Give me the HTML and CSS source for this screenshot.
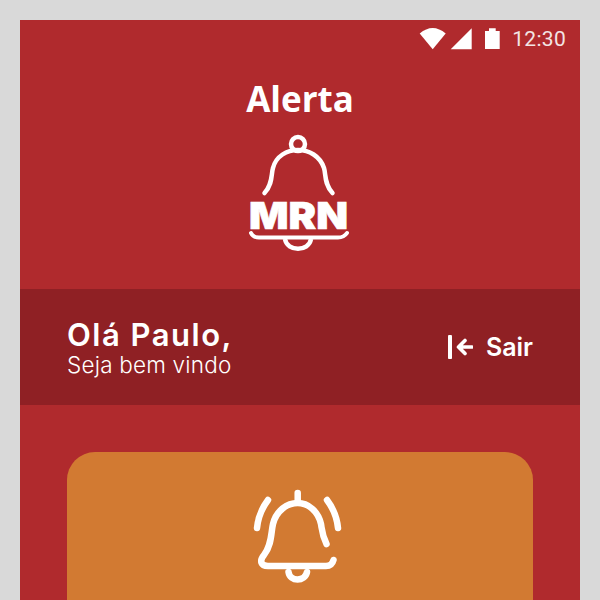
FILE: index.html
```html
<!DOCTYPE html>
<html lang="pt">
<head>
<meta charset="utf-8">
<title>Alerta MRN</title>
<link rel="stylesheet" href="styles.css">
</head>
<body>
<main class="screen">
  <div class="status">
    <svg class="status-icons" width="82" height="22" viewBox="420 28 82 22">
      <path d="M420.7 33.5 Q433.7 22.5 446.7 33.5 L433.7 49.3 Z" fill="#fff"/>
      <path d="M472.7 28.3 V49.3 H451.7 Z" fill="#fff"/>
      <path d="M486 31 H490 V28.3 H496.7 V31 H500.7 V49 H486 Z" fill="#fff"/>
    </svg>
    <span class="clock">12:30</span>
  </div>
  <header class="brand">
    <h1 class="title">Alerta</h1>
    <svg class="logo" width="104" height="120" viewBox="248 132 104 120">
      <circle cx="299" cy="143" r="7" fill="none" stroke="#fff" stroke-width="4.500"/>
      <path d="M265.5 192 C274 183 272 173 274 167 C277 155 288 149 299 149 C310 149 321 155 325 167 C327 173 325 183 333.500 192" fill="none" stroke="#fff" stroke-width="4.500" stroke-linecap="round"/>
      <text class="logo-text" x="250" y="228" textLength="99" lengthAdjust="spacingAndGlyphs">MRN</text>
      <path d="M252 232 Q254 236.500 260 236.500 H339 Q345 236.500 348 232" fill="none" stroke="#fff" stroke-width="4" stroke-linecap="round"/>
      <path d="M286 238 C288 251 310 251 312 238" fill="none" stroke="#fff" stroke-width="4.500"/>
    </svg>
  </header>
  <section class="band">
    <div class="greeting">
      <div class="hello">Olá Paulo,</div>
      <div class="welcome">Seja bem vindo</div>
    </div>
    <div class="logout">
      <svg width="26" height="24" viewBox="447 336 26 24">
        <path d="M450 337.500 V358.500" stroke="#fff" stroke-width="4" stroke-linecap="round" fill="none"/>
        <path d="M472 348 H459 M465 341.500 L458.500 348 L465 354.500" stroke="#fff" stroke-width="3.600" stroke-linecap="round" stroke-linejoin="round" fill="none"/>
      </svg>
      <span class="logout-label">Sair</span>
    </div>
  </section>
  <section class="card">
    <svg class="card-bell" width="92" height="100" viewBox="252 488 92 100">
      <g fill="none" stroke="#fff" stroke-width="6.500" stroke-linecap="round" stroke-linejoin="round">
        <path d="M297.700 493 V501"/>
        <path d="M326.500 544 C322 535 322 530 321 524 C318 511 308 503 297.700 503 C287 503 276 511 273 524 C271 532 272 545 264 555 C259 561 261 566 268 566 H326 Q332 566 333.500 560"/>
        <path d="M288.500 572 C290 582 305 582 307 572"/>
        <path d="M268 500 C262 508 258 518 257 528"/>
        <path d="M327 500 C333 508 337 518 338 528"/>
      </g>
    </svg>
  </section>
</main>
</body>
</html>
```
FILE: styles.css
```css
* { box-sizing: border-box; }
html, body { margin: 0; height: 600px; overflow: hidden; background: #d9d9d9; }
body { padding: 20px 20px 0; }
.screen { width: 560px; height: 580px; background: #b02a2d; color: #fff; display: flex; flex-direction: column; overflow: hidden; }
.status { flex: none; height: 38px; display: flex; justify-content: flex-end; align-items: center; padding-right: 14px; gap: 11px; }
.status-icons { display: block; }
.clock { font: 400 21px/24px Roboto, sans-serif; color: #f3e4e4; letter-spacing: .3px; }
.brand { flex: none; height: 231px; display: flex; flex-direction: column; align-items: center; }
.title { margin: 22px 0 0; font: 700 35px/38px "Open Sans", sans-serif; letter-spacing: 0; }
.logo { display: block; margin-top: 15px; margin-left: -2px; }
.logo-text { font: 900 37px Inter, sans-serif; fill: #fff; stroke: #fff; stroke-width: .6px; }
.band { flex: none; height: 116px; background: #8f2024; display: flex; justify-content: space-between; align-items: center; padding: 0 47px; }
.hello { font: 600 31px/35px Inter, sans-serif; letter-spacing: 1.500px; }
.welcome { font: 300 22.500px/26px Inter, sans-serif; letter-spacing: .2px; }
.logout { display: flex; align-items: center; gap: 13px; }
.logout svg { display: block; }
.logout-label { font: 600 25px/28px Inter, sans-serif; }
.card { margin: 47px 47px 0; height: 300px; flex: none; background: #d27a32; border-radius: 28px 28px 0 0; display: flex; justify-content: center; padding-top: 36px; }
.card-bell { display: block; margin-left: -4px; }
```
